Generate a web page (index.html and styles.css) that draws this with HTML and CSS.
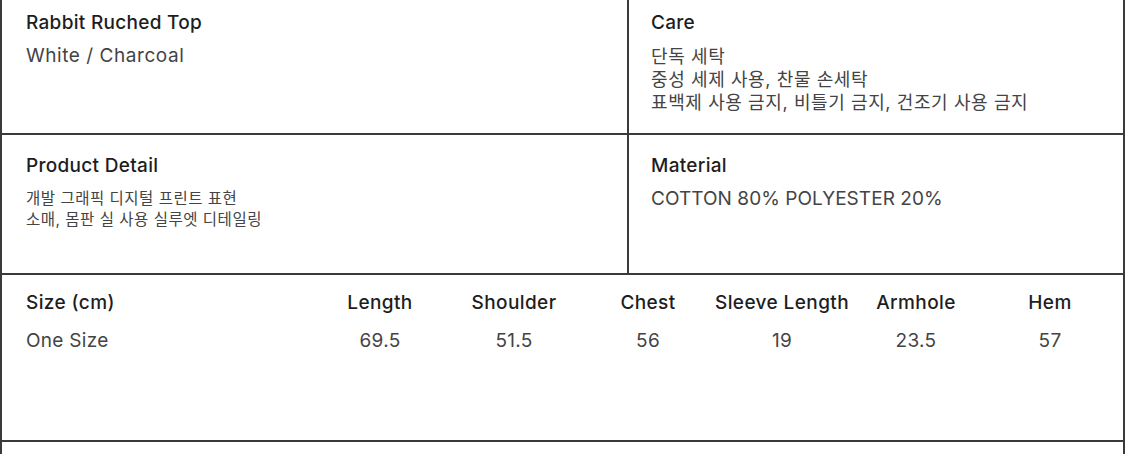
FILE: index.html
```html
<!DOCTYPE html>
<html lang="ko">
<head>
<meta charset="utf-8">
<link rel="stylesheet" href="styles.css">
</head>
<body>
<div class="sheet">
  <div class="row row-top">
    <div class="cell cell-left">
      <div class="title">Rabbit Ruched Top</div>
      <div class="text wide">White / Charcoal</div>
    </div>
    <div class="cell cell-right">
      <div class="title">Care</div>
      <div class="text ko">단독 세탁<br>중성 세제 사용, 찬물 손세탁<br>표백제 사용 금지, 비틀기 금지, 건조기 사용 금지</div>
    </div>
  </div>
  <div class="row row-mid">
    <div class="cell cell-left">
      <div class="title">Product Detail</div>
      <div class="text ko small">개발 그래픽 디지털 프린트 표현<br>소매, 몸판 실 사용 실루엣 디테일링</div>
    </div>
    <div class="cell cell-right">
      <div class="title">Material</div>
      <div class="text tight">COTTON 80% POLYESTER 20%</div>
    </div>
  </div>
  <div class="row row-size">
    <div class="size-grid">
      <div class="sh first">Size (cm)</div>
      <div class="sh">Length</div>
      <div class="sh">Shoulder</div>
      <div class="sh">Chest</div>
      <div class="sh">Sleeve Length</div>
      <div class="sh">Armhole</div>
      <div class="sh">Hem</div>
      <div class="sv first">One Size</div>
      <div class="sv">69.5</div>
      <div class="sv">51.5</div>
      <div class="sv">56</div>
      <div class="sv">19</div>
      <div class="sv">23.5</div>
      <div class="sv">57</div>
    </div>
  </div>
  <div class="row row-rest"></div>
</div>
</body>
</html>
```

FILE: styles.css
```css
html, body {
  margin: 0;
  padding: 0;
  background: #fff;
}
body {
  font-family: Inter, "Noto Sans CJK KR", sans-serif;
  color: #222;
  overflow: hidden;
}
.sheet {
  width: 1121px;
  height: 454px;
  border-left: 2px solid #3a3a3a;
  border-right: 2px solid #3a3a3a;
  display: flex;
  flex-direction: column;
}
.row {
  display: grid;
  grid-template-columns: 627px 1fr;
  border-bottom: 2px solid #3a3a3a;
  box-sizing: border-box;
}
.row-top { height: 135px; }
.row-mid { height: 140px; }
.row-size { height: 167px; display: block; }
.row-rest { flex: 1; border-bottom: none; }
.cell {
  box-sizing: border-box;
}
.cell-left {
  padding: 12px 0 0 24px;
  border-right: 2px solid #3a3a3a;
}
.cell-right {
  padding: 12px 0 0 22px;
}
.row-mid .cell { padding-top: 20px; }
.title {
  font-size: 19px;
  font-weight: 500;
  line-height: 22px;
  color: #1e1e1e;
  letter-spacing: 0.3px;
}
.text {
  margin-top: 11px;
  font-size: 19px;
  line-height: 22px;
  color: #444;
  letter-spacing: 0.3px;
}
.text.wide { letter-spacing: 0.55px; }
.text.tight { letter-spacing: 0.05px; }
.text.ko {
  font-size: 18px;
  line-height: 23px;
  margin-top: 11px;
  letter-spacing: 0.6px;
}
.text.small {
  font-size: 15.5px;
  line-height: 21px;
  margin-top: 11px;
  letter-spacing: 0.5px;
}
.size-grid {
  display: grid;
  grid-template-columns: 287px repeat(6, 134px);
  grid-template-rows: 22px 22px;
  row-gap: 16px;
  padding: 17px 0 0 24px;
}
.sh {
  font-size: 19px;
  font-weight: 500;
  line-height: 22px;
  color: #1e1e1e;
  text-align: center;
  white-space: nowrap;
  letter-spacing: 0.4px;
}
.sv {
  font-size: 19px;
  line-height: 22px;
  color: #444;
  text-align: center;
  letter-spacing: 0.3px;
}
.first { text-align: left; }
```
